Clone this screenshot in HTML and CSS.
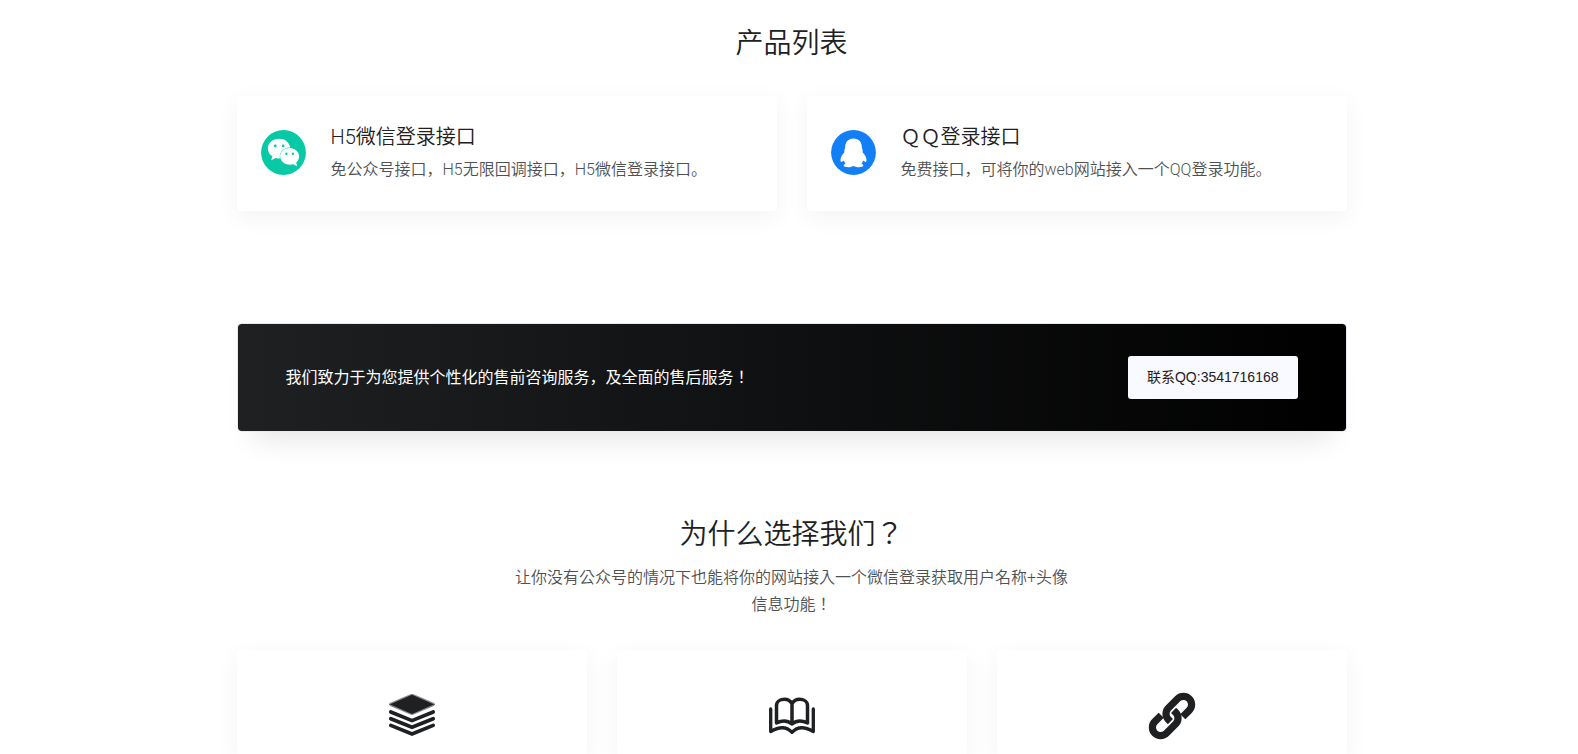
FILE: index.html
```html
<!DOCTYPE html>
<html lang="zh-CN">
<head>
<meta charset="utf-8">
<meta name="viewport" content="width=device-width, initial-scale=1">
<title>产品列表</title>
<link rel="stylesheet" href="styles.css">
</head>
<body>
<main class="page">
  <section class="products">
    <h2 class="heading">产品列表</h2>
    <div class="product-grid">
      <article class="card product">
        <svg class="product-icon" viewBox="0 0 46 46" aria-hidden="true">
          <circle cx="23" cy="23" r="22.9" fill="#07c9a6"/>
          <path fill="#fff" d="M18.7 9C12 9 7 13.200 7 18.900c0 3.300 1.700 6 4.500 7.900L10.500 31l4.500-2.500c1.500.4 2.900.6 4.400.5-1.200-5.500 3.500-11 10.600-11C29 12.500 24.500 9 18.700 9z"/>
          <path fill="#fff" d="M29.300 18.300c-5.400 0-9.700 3.800-9.700 8.600s4.300 8.600 9.700 8.600c1.200 0 2.300-.2 3.400-.5l4.200 2-.9-3.600c1.800-1.600 3-3.900 3-6.500 0-4.800-4.300-8.600-9.700-8.600z"/>
          <g fill="#07c9a6"><circle cx="14.600" cy="16.300" r="1.400"/><circle cx="22.600" cy="16.300" r="1.400"/><circle cx="26" cy="24.300" r="1.200"/><circle cx="32.600" cy="24.300" r="1.200"/></g>
        </svg>
        <div>
          <h3 class="product-title">H5微信登录接口</h3>
          <p class="text">免公众号接口，H5无限回调接口，H5微信登录接口。</p>
        </div>
      </article>
      <article class="card product">
        <svg class="product-icon" viewBox="0 0 46 46" aria-hidden="true">
          <circle cx="23" cy="23" r="22.900" fill="#127ff7"/>
          <path fill="#fff" d="M23 8.800c-5.500 0-8.600 3.900-8.600 9.200 0 1.200-.7 1.600-.8 3 0 .8.200 1.200.1 1.700-2.400 2.600-4 5.200-4 7.600 0 1.700.4 2.300.9 2.300.9 0 1.800-.8 2.600-1.300.3 1.300.9 2.300 1.600 3.100-1.400.5-1.900 1.200-1.900 2 0 1.200 2 1.600 4.600 1.600 2.300 0 4.200-.5 5.500-1.500 1.300 1 3.200 1.500 5.500 1.500 2.600 0 4.600-.4 4.600-1.600 0-.8-.5-1.500-1.900-2 .7-.8 1.300-1.800 1.600-3.100.8.500 1.700 1.300 2.600 1.300.5 0 .9-.6.9-2.300 0-2.400-1.600-5-4-7.600-.1-.5.1-.9.1-1.700-.1-1.400-.8-1.800-.8-3 0-5.300-3.100-9.200-8.600-9.200z"/>
        </svg>
        <div>
          <h3 class="product-title">ＱＱ登录接口</h3>
          <p class="text">免费接口，可将你的web网站接入一个QQ登录功能。</p>
        </div>
      </article>
    </div>
  </section>

  <section class="banner">
    <p class="banner-text">我们致力于为您提供个性化的售前咨询服务，及全面的售后服务<span class="mark" lang="zh-TW">！</span></p>
    <a class="contact" href="#contact">联系QQ:3541716168</a>
  </section>

  <section class="reasons">
    <h2 class="heading">为什么选择我们<span class="mark" lang="zh-TW">？</span></h2>
    <p class="text lead" lang="zh-TW">让你没有公众号的情况下也能将你的网站接入一个微信登录获取用户名称+头像信息功能！</p>
    <div class="reason-grid">
      <article class="card reason">
        <svg class="reason-icon" viewBox="0 0 48 48" aria-hidden="true">
          <path fill="#1e2022" stroke="#8b8b90" stroke-width="1.200" stroke-linejoin="round" d="M22.500 2.800 Q24 2.200 25.500 2.800 L45.500 11.400 Q47.500 12.400 45.500 13.400 L25.500 22 Q24 22.600 22.500 22 L2.500 13.400 Q.5 12.400 2.500 11.400Z"/>
          <path fill="none" stroke="#1e2022" stroke-width="3.700" stroke-linejoin="miter" stroke-linecap="round" d="M2.800 20 24 28.600 45.200 20M2.800 26.700 24 35.300 45.200 26.700M2.800 33.400 24 42 45.200 33.400"/>
        </svg>
      </article>
      <article class="card reason">
        <svg class="reason-icon" viewBox="0 0 48 48" aria-hidden="true">
          <g fill="none" stroke="#1e2022" stroke-linejoin="round" stroke-linecap="round">
            <path stroke-width="3.500" d="M24 11.500C22 8.500 19.500 7.300 16.500 7.300c-4 0-8 2-8 6.200V31c5-2.500 11-2.700 15.500 1 4.500-3.700 10.500-3.500 15.500-1V13.500c0-4.200-4-6.200-8-6.200-3 0-5.500 1.200-7.500 4.200zM24 11.500V32"/>
            <path stroke-width="3.300" d="M2.700 17v22.500c7.500-4.500 15.500-5.500 21.300.8 5.800-6.300 13.800-5.300 21.300-.8V17"/>
          </g>
        </svg>
      </article>
      <article class="card reason">
        <svg class="reason-icon" viewBox="0 0 48 48" aria-hidden="true">
          <g fill="none" stroke="#1e2022" stroke-width="7.200">
            <path d="M13.200 23.200 6.800 29.600a8.200 8.200 0 0 0 0 11.600 8.200 8.200 0 0 0 11.600 0L27.600 32a8.200 8.200 0 0 0 0-11.600l-2-2"/>
            <path d="M34.800 24.800 41.200 18.400a8.200 8.200 0 0 0 0-11.600 8.200 8.200 0 0 0-11.600 0L20.400 16a8.200 8.200 0 0 0 0 11.600l2 2"/>
          </g>
        </svg>
      </article>
    </div>
  </section>
</main>
</body>
</html>
```
FILE: styles.css
```css
* {
  box-sizing: border-box;
}

body {
  margin: 0;
  padding-left: 5px;
  background: #fff;
  color: #1e2022;
  font-family: Roboto, "Noto Sans CJK SC", sans-serif;
  font-size: 16px;
  line-height: 27px;
}

h2, h3, p {
  margin: 0;
  font-weight: 350;
}

.page {
  display: flex;
  flex-direction: column;
  min-height: 100vh;
  max-width: 1110px;
  margin: 0 auto;
}

.heading {
  font-size: 28px;
  line-height: 40px;
  text-align: center;
}

.mark {
  display: inline-block;
  font-family: "Noto Sans CJK TC", sans-serif;
  line-height: 1;
}

.text {
  color: #4d5154;
}

.card {
  border-radius: 4px;
  background: #fff;
  box-shadow: 0 6px 24px rgba(0, 0, 0, 0.05);
}

.products {
  padding-top: 24px;
}

.product-grid {
  display: grid;
  grid-template-columns: 1fr 1fr;
  gap: 30px;
  margin-top: 32px;
}

.product {
  display: flex;
  align-items: center;
  gap: 25px;
  padding: 26px 24px 28px;
}

.product-icon {
  flex: none;
  width: 45px;
  height: 45px;
}

.product-title {
  margin-bottom: 4px;
  font-size: 20px;
  line-height: 30px;
}

.banner {
  display: flex;
  align-items: center;
  justify-content: space-between;
  gap: 24px;
  margin-top: 112px;
  padding: 32px 48px;
  border: 1px solid #e7eaf3;
  border-radius: 4px;
  background: linear-gradient(to right, #1e2022, #000) padding-box;
  box-shadow: 0 24px 28px -16px rgba(0, 0, 0, 0.1);
}

.banner-text {
  color: #fff;
  font-weight: 400;
}

.contact {
  flex: none;
  padding: 8px 19px;
  border-radius: 3px;
  background: #f8faff;
  color: #1e2022;
  font-family: "Liberation Sans", "Noto Sans CJK SC", sans-serif;
  font-size: 14px;
  text-decoration: none;
}

.reasons {
  display: flex;
  flex: 1;
  flex-direction: column;
  margin-top: 83px;
}

.lead {
  max-width: 556px;
  margin: 9px auto 0;
  font-family: Roboto, "Noto Sans CJK TC", sans-serif;
  text-align: center;
}

.reason-grid {
  display: grid;
  flex: 1;
  grid-template-columns: repeat(3, 1fr);
  gap: 30px;
  margin-top: 32px;
}

.reason {
  padding: 42px 24px 12px;
  border-radius: 4px 4px 0 0;
  text-align: center;
}

.reason-icon {
  display: block;
  width: 48px;
  height: 48px;
  margin: 0 auto;
}
```
